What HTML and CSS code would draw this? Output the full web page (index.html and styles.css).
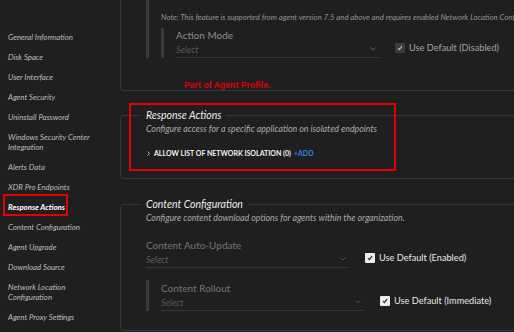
FILE: index.html
```html
<!DOCTYPE html>
<html lang="en">
<head>
<meta charset="UTF-8">
<meta name="viewport" content="width=device-width, initial-scale=1.0">
<title>Agent Settings Profile</title>
<link rel="stylesheet" href="styles.css">
</head>
<body>
<div class="page">
    <!-- Menu des sections -->
    <nav class="sidenav">
        <a>General Information</a>
        <a>Disk Space</a>
        <a>User Interface</a>
        <a>Agent Security</a>
        <a>Uninstall Password</a>
        <a>Windows Security Center Integration</a>
        <a>Alerts Data</a>
        <a>XDR Pro Endpoints</a>
        <a class="active">Response Actions</a>
        <a>Content Configuration</a>
        <a>Agent Upgrade</a>
        <a>Download Source</a>
        <a>Network Location Configuration</a>
        <a>Agent Proxy Settings</a>
    </nav>

    <main class="content">
        <!-- section précédente (coupée en haut) -->
        <div class="section section-cut">
            <div class="group">
                <p class="note">Note: This feature is supported from agent version 7.5 and above and requires enabled Network Location Configuration.</p>
                <div class="group inner">
                    <div class="row">
                        <div class="field">
                            <div class="field-label">Action Mode</div>
                            <div class="select">Select
                                <svg width="6" height="4" viewBox="0 0 6 4"><polyline points="0.5,0.5 3,3 5.5,0.5" fill="none" stroke="#666" stroke-width="1"/></svg>
                            </div>
                        </div>
                        <label class="default">
                            <span class="check"><svg width="6" height="6" viewBox="0 0 6 6"><polyline points="1,3.2 2.4,4.6 5,1.2" fill="none" stroke="#bbb" stroke-width="1.1"/></svg></span>
                            Use Default (Disabled)
                        </label>
                    </div>
                </div>
            </div>
        </div>

        <span class="annotation">Part of Agent Profile.</span>

        <fieldset class="section">
            <legend>Response Actions</legend>
            <p class="desc">Configure access for a specific application on isolated endpoints</p>
            <div class="list-row">
                <svg class="caret" width="3" height="5" viewBox="0 0 3 5"><polyline points="0.5,0.5 2.5,2.5 0.5,4.5" fill="none" stroke="#ccc" stroke-width="0.9"/></svg>
                ALLOW LIST OF NETWORK ISOLATION (0)
                <a class="add">+ADD</a>
            </div>
            <span class="highlight"></span>
        </fieldset>

        <fieldset class="section">
            <legend>Content Configuration</legend>
            <p class="desc">Configure content download options for agents within the organization.</p>
            <div class="row first">
                <div class="field">
                    <div class="field-label dim">Content Auto-Update</div>
                    <div class="select">Select
                        <svg width="6" height="4" viewBox="0 0 6 4"><polyline points="0.5,0.5 3,3 5.5,0.5" fill="none" stroke="#555" stroke-width="1"/></svg>
                    </div>
                </div>
                <label class="default on">
                    <span class="check"><svg width="6" height="6" viewBox="0 0 6 6"><polyline points="1,3.2 2.4,4.6 5,1.2" fill="none" stroke="#222" stroke-width="1.2"/></svg></span>
                    Use Default (Enabled)
                </label>
            </div>
            <div class="group inner rollout">
                <div class="row">
                    <div class="field">
                        <div class="field-label dim">Content Rollout</div>
                        <div class="select">Select
                            <svg width="6" height="4" viewBox="0 0 6 4"><polyline points="0.5,0.5 3,3 5.5,0.5" fill="none" stroke="#555" stroke-width="1"/></svg>
                        </div>
                    </div>
                    <label class="default on">
                        <span class="check"><svg width="6" height="6" viewBox="0 0 6 6"><polyline points="1,3.2 2.4,4.6 5,1.2" fill="none" stroke="#222" stroke-width="1.2"/></svg></span>
                        Use Default (Immediate)
                    </label>
                </div>
            </div>
        </fieldset>
    </main>
</div>
</body>
</html>
```

FILE: styles.css
```css
/* Styles généraux */
body {
    margin: 0;
    padding: 0;
    background-color: #1f1f1f;
    font-family: Lato, "Open Sans", sans-serif;
    color: #cccccc;
    overflow: hidden;
}

.page {
    display: flex;
    height: 100vh;
}

/* Menu latéral */
.sidenav {
    width: 120px;
    flex: none;
    box-sizing: border-box;
    padding: 32px 20px 0 8px;
    display: flex;
    flex-direction: column;
    align-items: flex-start;
    gap: 10px;
}
.sidenav a {
    position: relative;
    font-size: 7.8px;
    line-height: 10px;
    font-style: italic;
    color: #bdbdbd;
}
.sidenav a.active {
    font-weight: bold;
    color: #ffffff;
}
.sidenav a.active::after {
    content: "";
    position: absolute;
    top: -8px;
    bottom: -4px;
    left: -5px;
    right: -3px;
    border: 2px solid #e60000;
}

/* Contenu */
.content {
    flex: 1;
    min-width: 0;
    overflow: hidden;
    position: relative;
}

.section {
    border: 1px solid #2d3844;
    border-radius: 3px;
    margin: 0 -12px 0 0;
    padding: 0 0 19px 25px;
}
.section-cut {
    border-top: none;
    border-radius: 0 0 3px 3px;
    padding-bottom: 32px;
}
fieldset.section {
    position: relative;
    min-width: 0;
    margin-top: 17px;
}
fieldset.section + fieldset.section {
    margin-top: 18px;
}
legend {
    margin-left: -5px;
    padding: 0 5px;
    font-size: 10.5px;
    line-height: 14px;
    font-style: italic;
    color: #ececec;
}

.group {
    border-left: 3px solid #3a3a3a;
    padding-left: 12px;
}
.group.inner {
    margin-top: 5px;
    padding-top: 1px;
}
.group.rollout {
    margin-top: 12px;
    padding-top: 2px;
}

.note {
    margin: 0;
    padding-top: 11px;
    font-size: 7.8px;
    line-height: 12px;
    font-style: italic;
    color: #939393;
    white-space: nowrap;
}
.desc {
    margin: 1px 0 0;
    font-size: 8.8px;
    line-height: 12px;
    font-style: italic;
    color: #ababab;
}

/* Champs */
.row {
    display: flex;
    align-items: flex-end;
    gap: 16px;
}
.row.first {
    margin-top: 15px;
}
.field {
    width: 203px;
    flex: none;
}
.field-label {
    font-size: 10px;
    line-height: 12px;
    color: #8e8e8e;
}
.field-label.dim {
    color: #747474;
}
.select {
    display: flex;
    justify-content: space-between;
    align-items: center;
    height: 16px;
    padding-right: 3px;
    border-bottom: 1px solid #383838;
    font-size: 9px;
    font-style: italic;
    color: #5a5a5a;
}

.default {
    display: flex;
    align-items: center;
    gap: 4px;
    margin-bottom: 5px;
    font-size: 9.2px;
    line-height: 10px;
    color: #a3a3a3;
    white-space: nowrap;
}
.default.on {
    color: #e8e8e8;
}
.check {
    width: 10px;
    height: 10px;
    border-radius: 1px;
    background-color: #3c3c3c;
    display: flex;
    align-items: center;
    justify-content: center;
}
.default.on .check {
    background-color: #ececec;
}

/* Liste d'autorisation */
.list-row {
    display: flex;
    align-items: center;
    margin-top: 12px;
    font-size: 7px;
    line-height: 12px;
    font-weight: bold;
    color: #f2f2f2;
    white-space: nowrap;
}
.caret {
    margin: 0 4px 0 1px;
}
.add {
    margin-left: 3px;
    color: #2b86e0;
}

/* Annotations rouges */
.annotation {
    position: absolute;
    left: 64px;
    top: 80px;
    font-family: "Liberation Sans", Arial, sans-serif;
    font-size: 8.5px;
    font-weight: bold;
    letter-spacing: 0.1px;
    color: #e00000;
}
.highlight {
    position: absolute;
    left: 8px;
    top: -19px;
    width: 267px;
    height: 68px;
    box-sizing: border-box;
    border: 2px solid #e60000;
}
```
